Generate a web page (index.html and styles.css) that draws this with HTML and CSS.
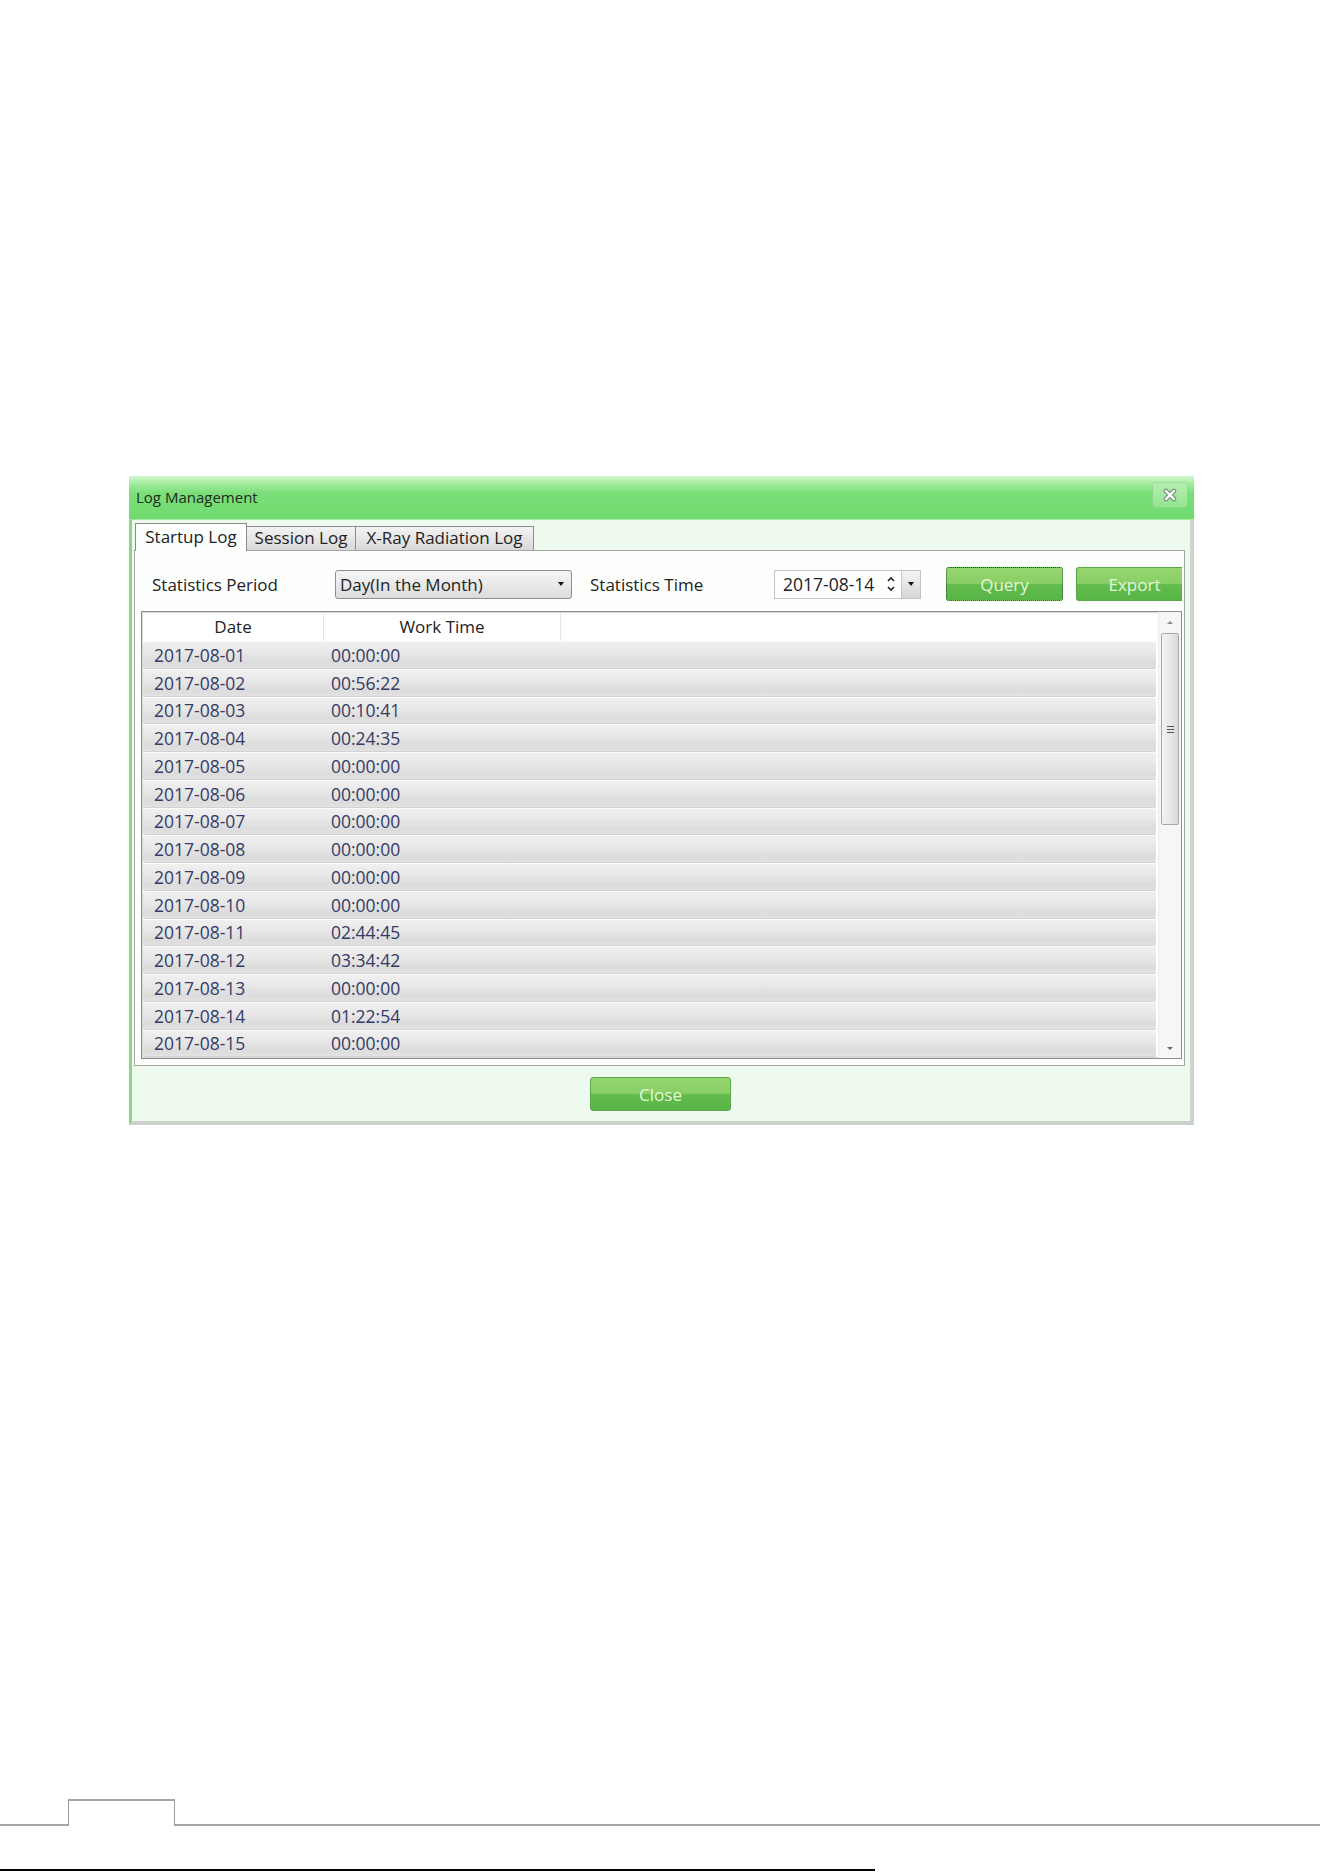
FILE: index.html
```html
<!DOCTYPE html>
<html lang="en">
<head>
  <meta charset="UTF-8" />
  <meta name="viewport" content="width=device-width, initial-scale=1.0" />
  <title>Log Management</title>
  <link rel="stylesheet" href="styles.css">
</head>
<body>
  <div class="sheet">
    <div class="dialog">
      <div class="titlebar">
        <span class="title">Log Management</span>
        <span class="close-x">
          <svg width="14" height="14" viewBox="0 0 14 14">
            <path d="M3 3 L11 11 M11 3 L3 11" stroke="#7d917d" stroke-width="4.6" stroke-linecap="round" fill="none"/>
            <path d="M3 3 L11 11 M11 3 L3 11" stroke="#fff" stroke-width="2.4" stroke-linecap="round" fill="none"/>
          </svg>
        </span>
      </div>
      <div class="dialog-body">
        <div class="tabs">
          <div class="tab tab-startup active">Startup Log</div>
          <div class="tab tab-session">Session Log</div>
          <div class="tab tab-xray">X-Ray Radiation Log</div>
        </div>
        <div class="panel">
          <div class="toolbar">
            <span class="label label-period">Statistics Period</span>
            <div class="combo">
              <span>Day(In the Month)</span>
              <i class="caret"></i>
            </div>
            <span class="label label-time">Statistics Time</span>
            <div class="date-box">
              <span class="date-text">2017-08-14</span>
              <svg class="spin" width="10" height="20" viewBox="0 0 10 20">
                <path d="M2 7 L5 4 L8 7" stroke="#222" stroke-width="1.6" fill="none"/>
                <path d="M2 13 L5 16 L8 13" stroke="#222" stroke-width="1.6" fill="none"/>
              </svg>
              <span class="date-drop"><i class="caret"></i></span>
            </div>
            <button class="btn btn-query">Query</button>
            <button class="btn btn-export">Export</button>
          </div>
          <div class="grid">
            <div class="grid-main">
              <div class="grid-head">
                <span class="col-date">Date</span>
                <span class="col-time">Work Time</span>
                <span class="col-rest"></span>
              </div>
              <div class="row"><span class="col-date">2017-08-01</span><span class="col-time">00:00:00</span></div>
              <div class="row"><span class="col-date">2017-08-02</span><span class="col-time">00:56:22</span></div>
              <div class="row"><span class="col-date">2017-08-03</span><span class="col-time">00:10:41</span></div>
              <div class="row"><span class="col-date">2017-08-04</span><span class="col-time">00:24:35</span></div>
              <div class="row"><span class="col-date">2017-08-05</span><span class="col-time">00:00:00</span></div>
              <div class="row"><span class="col-date">2017-08-06</span><span class="col-time">00:00:00</span></div>
              <div class="row"><span class="col-date">2017-08-07</span><span class="col-time">00:00:00</span></div>
              <div class="row"><span class="col-date">2017-08-08</span><span class="col-time">00:00:00</span></div>
              <div class="row"><span class="col-date">2017-08-09</span><span class="col-time">00:00:00</span></div>
              <div class="row"><span class="col-date">2017-08-10</span><span class="col-time">00:00:00</span></div>
              <div class="row"><span class="col-date">2017-08-11</span><span class="col-time">02:44:45</span></div>
              <div class="row"><span class="col-date">2017-08-12</span><span class="col-time">03:34:42</span></div>
              <div class="row"><span class="col-date">2017-08-13</span><span class="col-time">00:00:00</span></div>
              <div class="row"><span class="col-date">2017-08-14</span><span class="col-time">01:22:54</span></div>
              <div class="row"><span class="col-date">2017-08-15</span><span class="col-time">00:00:00</span></div>
            </div>
            <div class="scrollbar">
              <div class="sb-arrow"><i class="sb-up"></i></div>
              <div class="sb-thumb"><span class="grip"></span></div>
              <div class="sb-track"></div>
              <div class="sb-arrow"><i class="sb-down"></i></div>
            </div>
          </div>
        </div>
        <div class="dialog-foot">
          <button class="btn btn-close">Close</button>
        </div>
      </div>
    </div>
    <div class="page-rule">
      <div class="rule-left"></div>
      <div class="rule-tab"></div>
      <div class="rule-right"></div>
    </div>
    <div class="page-line"></div>
  </div>
</body>
</html>
```

FILE: styles.css
```css
body {
  margin: 0;
  padding: 0;
  background: #fff;
  font-family: 'Open Sans', 'Noto Sans', Arial, sans-serif;
  color: #222;
  overflow: hidden;
}
.sheet {
  padding-top: 476px;
}
.dialog {
  margin-left: 129px;
  width: 1065px;
  height: 649px;
  display: flex;
  flex-direction: column;
}
.titlebar {
  height: 44px;
  box-sizing: border-box;
  display: flex;
  align-items: center;
  justify-content: space-between;
  padding: 0 7px 0 7px;
  background: linear-gradient(#d2f8ce 0%, #a2eb9e 18%, #7ade78 40%, #70db6f 100%);
  border-bottom: 1px solid #a4e8a0;
}
.title {
  font-size: 15px;
  color: #1e2b1e;
  margin-top: -1px;
}
.close-x {
  width: 34px;
  height: 24px;
  margin-top: -6px;
  display: flex;
  align-items: center;
  justify-content: center;
  border-radius: 3px;
  background: linear-gradient(#b4efb0, #94e490);
  box-shadow: 0 0 0 1px rgba(150,210,150,0.6);
}
.dialog-body {
  flex: 1;
  box-sizing: border-box;
  background: #eefaed;
  border-left: 3px solid #86da82;
  border-right: 4px solid #cdd6cd;
  border-bottom: 4px solid #cbd2cb;
  padding: 3px 5px 0 2px;
  display: flex;
  flex-direction: column;
}
.tabs {
  height: 27px;
  display: flex;
  align-items: flex-end;
  padding-left: 1px;
}
.tab {
  box-sizing: border-box;
  height: 24px;
  font-size: 17px;
  line-height: 22px;
  text-align: center;
  border: 1px solid #8c8c8c;
  border-bottom: none;
  background: linear-gradient(#f3f3f3, #d9d9d9);
  color: #222;
}
.tab.active {
  position: relative;
  z-index: 1;
  height: 28px;
  margin-bottom: -1px;
  line-height: 26px;
  background: #fdfffd;
}
.tab-startup { width: 112px; }
.tab-session { width: 110px; margin-left: -1px; }
.tab-xray { width: 179px; margin-left: -1px; }
.panel {
  height: 516px;
  box-sizing: border-box;
  border: 1px solid #a6a6a6;
  background: #fdfffd;
  padding: 16px 2px 6px 6px;
  display: flex;
  flex-direction: column;
}
.toolbar {
  height: 34px;
  margin-bottom: 10px;
  display: flex;
  align-items: center;
  font-size: 17px;
}
.label {
  color: #222;
  white-space: nowrap;
}
.label-period {
  width: 183px;
  margin-left: 11px;
}
.label-time {
  width: 184px;
  margin-left: 18px;
}
.combo {
  box-sizing: border-box;
  width: 237px;
  height: 29px;
  border: 1px solid #8e8e8e;
  border-radius: 3px;
  background: linear-gradient(#f6f6f6, #e9e9e9 50%, #dcdcdc);
  display: flex;
  align-items: center;
  justify-content: space-between;
  padding: 0 7px 0 4px;
  font-size: 17px;
}
.caret {
  display: block;
  width: 0;
  height: 0;
  border-left: 3.5px solid transparent;
  border-right: 3.5px solid transparent;
  border-top: 4px solid #111;
}
.date-box {
  box-sizing: border-box;
  width: 147px;
  height: 29px;
  display: flex;
  align-items: center;
  border: 1px solid #c4c4c4;
  background: #fff;
  font-size: 17.5px;
}
.date-text {
  margin-left: 8px;
  width: 100px;
}
.spin {
  margin-left: 3px;
}
.date-drop {
  margin-left: auto;
  width: 19px;
  height: 27px;
  box-sizing: border-box;
  border-left: 1px solid #c8c8c8;
  background: linear-gradient(#f4f4f4, #d6d6d6);
  display: flex;
  align-items: center;
  justify-content: center;
}
.btn {
  font-family: 'Open Sans', 'Noto Sans', Arial, sans-serif;
  font-size: 17px;
  color: #e6f6de;
  border: 1px solid #5aa84a;
  border-radius: 3px;
  background: linear-gradient(#97d571 0%, #89cf64 48%, #62bc4d 52%, #58b646 100%);
  padding: 0;
  cursor: pointer;
}
.btn-query {
  width: 117px;
  height: 34px;
  margin-left: 25px;
  border: 1px dotted #2f4f2a;
}
.btn-export {
  width: 106px;
  height: 34px;
  margin-left: 13px;
  padding-left: 10px;
  border-right: none;
  border-radius: 3px 0 0 3px;
}
.grid {
  height: 448px;
  box-sizing: border-box;
  border: 1px solid #8e8e8e;
  box-shadow: inset 0 0 0 1px #d9d9d9;
  background: #fff;
  display: flex;
}
.grid-main {
  flex: 1;
  padding: 1px 2px 0 1px;
  overflow: hidden;
}
.grid-head {
  height: 28px;
  display: flex;
  font-size: 17px;
  background: #fff;
}
.grid-head span {
  box-sizing: border-box;
  text-align: center;
  line-height: 28px;
  border-right: 1px solid #e6e6e6;
}
.grid-head .col-date { width: 181px; }
.grid-head .col-time { width: 237px; }
.grid-head .col-rest { flex: 1; border-right: none; }
.row {
  height: 27.75px;
  box-sizing: border-box;
  display: flex;
  align-items: center;
  font-size: 17.5px;
  color: #353b66;
  border-top: 1px solid #fbfbfb;
  border-bottom: 1px solid #d2d2d2;
  border-radius: 2px;
  background: linear-gradient(#f0f0f0 0%, #e8e8e8 40%, #dcdcdc 80%, #e2e2e2 100%);
}
.row .col-date {
  width: 181px;
  box-sizing: border-box;
  padding-left: 11px;
}
.row .col-time {
  padding-left: 7px;
}
.scrollbar {
  width: 22px;
  display: flex;
  flex-direction: column;
  background: #f6f6f6;
  border-left: 1px solid #ececec;
}
.sb-arrow {
  height: 20px;
  display: flex;
  align-items: center;
  justify-content: center;
}
.sb-up, .sb-down {
  display: block;
  width: 0;
  height: 0;
  border-left: 3px solid transparent;
  border-right: 3px solid transparent;
}
.sb-up { border-bottom: 3px solid #8a8a8a; }
.sb-down { border-top: 3px solid #6a6a6a; }
.sb-thumb {
  height: 192px;
  margin: 1px 2px 0 2px;
  box-sizing: border-box;
  border: 1px solid #a9a9a9;
  border-radius: 2px;
  background: linear-gradient(90deg, #f3f3f3, #e6e6e6 60%, #d8d8d8);
  display: flex;
  align-items: center;
  justify-content: center;
}
.grip {
  width: 7px;
  height: 7px;
  background: repeating-linear-gradient(#555 0 1px, transparent 1px 3px);
}
.sb-track {
  flex: 1;
}
.dialog-foot {
  flex: 1;
  display: flex;
  justify-content: center;
  align-items: flex-start;
  padding-top: 11px;
}
.btn-close {
  width: 141px;
  height: 34px;
  margin-left: 2px;
}
.page-rule {
  margin-top: 674px;
  height: 27px;
  display: flex;
  align-items: flex-end;
}
.rule-left {
  width: 68px;
  border-bottom: 2px solid #a6a6a6;
}
.rule-tab {
  width: 107px;
  height: 27px;
  box-sizing: border-box;
  border: 1px solid #9a9a9a;
  border-top: 2px solid #a6a6a6;
  border-bottom: none;
}
.rule-right {
  width: 1145px;
  border-bottom: 2px solid #a6a6a6;
}
.page-line {
  margin-top: 43px;
  width: 875px;
  height: 2px;
  background: #000;
}
```
